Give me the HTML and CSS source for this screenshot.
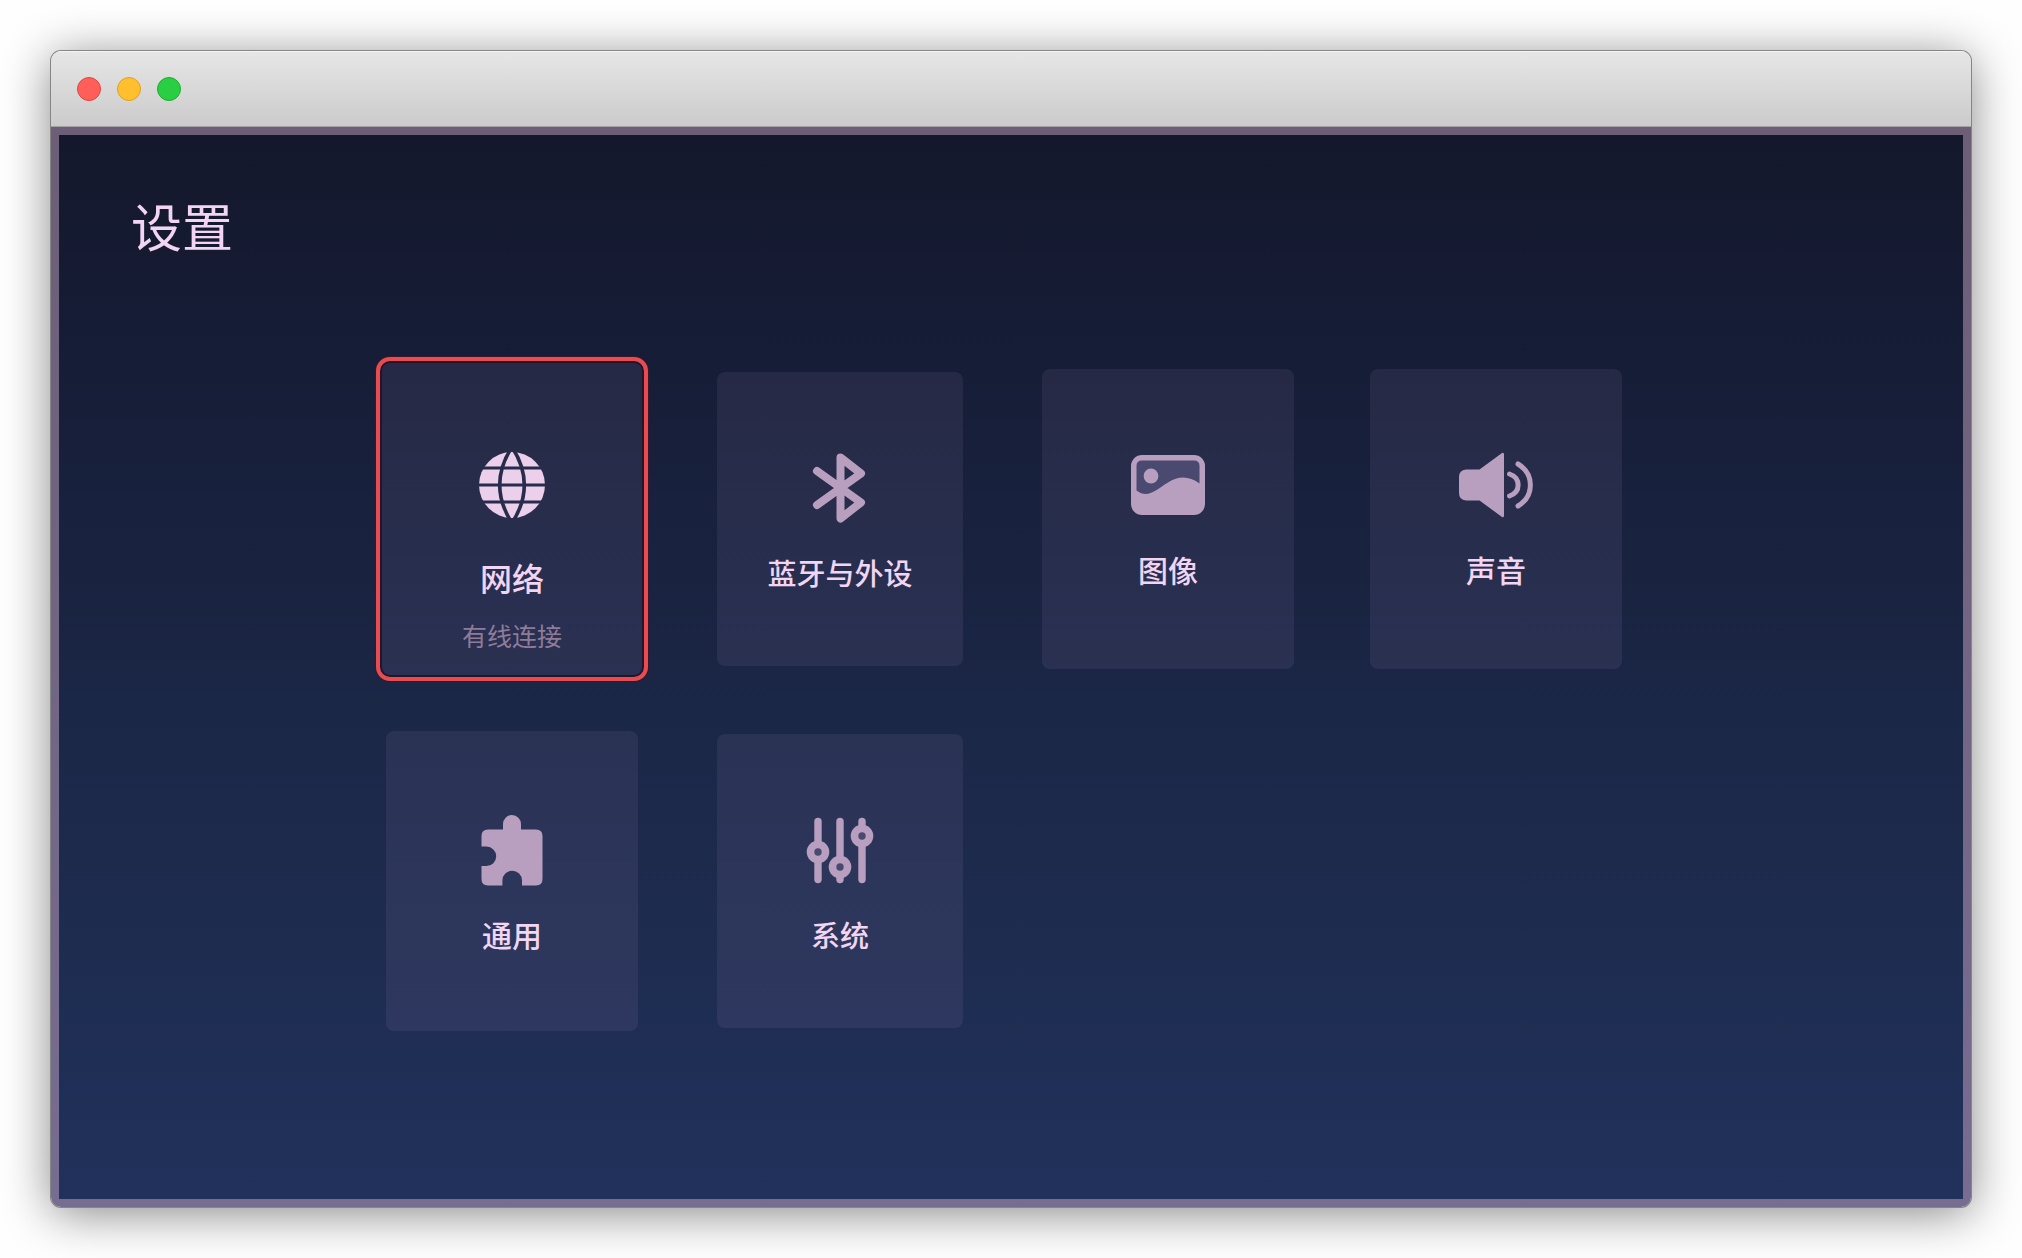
FILE: index.html
```html
<!DOCTYPE html>
<html lang="zh-CN">
<head>
<meta charset="utf-8">
<meta name="viewport" content="width=device-width, initial-scale=1">
<title>设置</title>
<link rel="stylesheet" href="styles.css">
</head>
<body>
<div class="window">
  <header class="titlebar">
    <button class="light light-close" type="button" aria-label="关闭"></button>
    <button class="light light-minimize" type="button" aria-label="最小化"></button>
    <button class="light light-zoom" type="button" aria-label="缩放"></button>
  </header>
  <div class="frame">
    <main class="screen">
      <h1 class="title">设置</h1>
      <ul class="grid">
        <li class="cell">
          <button class="card card-focused" type="button">
            <svg class="icon" viewBox="-38 -38 76 76" aria-hidden="true">
              <mask id="globe-lines">
                <rect x="-38" y="-38" width="76" height="76" fill="#fff"/>
                <g fill="none" stroke="#000" stroke-width="3">
                  <path d="M-38-17H38M-38 0H38M-38 17H38"/>
                  <path d="M0-38Q24.600 0 0 38Q-24.600 0 0-38Z" stroke-width="3.600"/>
                </g>
              </mask>
              <circle r="33" fill="currentColor" mask="url(#globe-lines)"/>
            </svg>
            <span class="label">网络</span>
            <span class="status">有线连接</span>
          </button>
        </li>
        <li class="cell">
          <button class="card card-compact" type="button">
            <svg class="icon" viewBox="-38 -38 76 76" aria-hidden="true">
              <path d="M-23-17L21 14.500L.5 30.500V-30.500L21-14.500L-23 17" fill="none" stroke="currentColor" stroke-width="8" stroke-linecap="round" stroke-linejoin="round"/>
            </svg>
            <span class="label">蓝牙与外设</span>
          </button>
        </li>
        <li class="cell">
          <button class="card" type="button">
            <svg class="icon" viewBox="-38 -38 76 76" aria-hidden="true">
              <rect x="-37" y="-30" width="74" height="60" rx="11" fill="currentColor"/>
              <path class="icon-inset" d="M-31.500-19Q-31.500-24.500-26-24.500H26Q31.500-24.500 31.500-19V-1.500C21-9 11-9.500 0-2.500C-11 4-20 14.500-31.500 5.500Z"/>
              <circle cx="-17" cy="-9" r="7.400" fill="currentColor"/>
            </svg>
            <span class="label">图像</span>
          </button>
        </li>
        <li class="cell">
          <button class="card" type="button">
            <svg class="icon" viewBox="-38 -38 76 76" aria-hidden="true">
              <path d="M-30-15.500H-16.500L6-32Q8-33 8-30.500V30.500Q8 33 6 32L-16.500 15.500H-30Q-37 15-37 8V-8Q-37-15-30-15.500Z" fill="currentColor"/>
              <path d="M13.500-11C25-7 25 7 13.500 11M22-21C38.500-11 38.500 11 22 21" fill="none" stroke="currentColor" stroke-width="5" stroke-linecap="round"/>
            </svg>
            <span class="label">声音</span>
          </button>
        </li>
        <li class="cell">
          <button class="card" type="button">
            <svg class="icon icon-tall" viewBox="-38 -38 76 79" aria-hidden="true">
              <path d="M-24-17.500H-9V-23A9 9 0 0 1 9-23V-17.500H24Q30.500-17.500 30.500-11V32Q30.500 38.500 24 38.500H10V33.500A9.800 9.800 0 0 0-9.600 33.500V38.500H-24Q-30.500 38.500-30.500 32V19H-25.500A9.700 9.700 0 0 0-25.500-.4H-30.500V-11Q-30.500-17.500-24-17.500Z" fill="currentColor"/>
            </svg>
            <span class="label">通用</span>
          </button>
        </li>
        <li class="cell">
          <button class="card card-compact" type="button">
            <svg class="icon" viewBox="-38 -38 76 76" aria-hidden="true">
              <path d="M-22-28.500V29.500M0-28.500V29.500M22-28.500V29.500" fill="none" stroke="currentColor" stroke-width="7.400" stroke-linecap="round"/>
              <g fill="currentColor">
                <circle cx="-22" cy="2" r="11.300"/>
                <circle cx="0" cy="17" r="11.300"/>
                <circle cx="22" cy="-14" r="11.300"/>
              </g>
              <g class="icon-inset">
                <circle cx="-22" cy="2" r="3.700"/>
                <circle cx="0" cy="17" r="3.700"/>
                <circle cx="22" cy="-14" r="3.700"/>
              </g>
            </svg>
            <span class="label">系统</span>
          </button>
        </li>
      </ul>
    </main>
  </div>
</div>
</body>
</html>
```

FILE: styles.css
```css
* {
  box-sizing: border-box;
}

body {
  margin: 0;
  min-height: 100vh;
  padding: 51px;
  display: flex;
  background: #fefefe;
  font-family: "Noto Sans CJK SC", "Noto Sans", sans-serif;
}

.window {
  flex: 1;
  display: flex;
  flex-direction: column;
  border-radius: 10px;
  overflow: hidden;
  box-shadow: 0 0 0 1px #868686, 0 6px 48px rgba(0, 0, 0, 0.48);
}

.titlebar {
  display: flex;
  align-items: center;
  gap: 16px;
  height: 76px;
  padding: 0 26px;
  background: linear-gradient(#e6e6e6, #cbcbcb);
  border-top: 1px solid #f4f4f4;
  border-bottom: 1px solid #a3a1a3;
}

.light {
  width: 24px;
  height: 24px;
  padding: 0;
  border: 1px solid;
  border-radius: 50%;
}

.light-close {
  background: #ff5f58;
  border-color: #e2463f;
}

.light-minimize {
  background: #ffbf2f;
  border-color: #e0a023;
}

.light-zoom {
  background: #29ce42;
  border-color: #1dae2c;
}

.frame {
  flex: 1;
  display: flex;
  padding: 8px;
  background: linear-gradient(#6c5e76, #776d91);
}

.screen {
  flex: 1;
  padding: 54px 72px;
  background: linear-gradient(#14182c, #161d37 22%, #1b2746 54%, #21315b);
}

.title {
  margin: 0;
  font-size: 51px;
  line-height: 72px;
  font-weight: 400;
  color: #f1d5f3;
}

.grid {
  display: flex;
  flex-wrap: wrap;
  gap: 62px 76px;
  width: 1250px;
  max-width: 100%;
  margin: 108px auto 0;
  padding: 0 14px 0 0;
  list-style: none;
}

.cell {
  display: flex;
  align-items: center;
  justify-content: center;
  width: 252px;
  height: 300px;
}

.card {
  flex: none;
  display: flex;
  flex-direction: column;
  align-items: center;
  justify-content: flex-start;
  width: 252px;
  height: 300px;
  padding: 78px 0 0;
  border: 0;
  border-radius: 8px;
  background: rgba(200, 170, 220, 0.09);
  color: #b99fbf;
  font-family: inherit;
}

.card-compact {
  width: 246px;
  height: 294px;
}

.card-focused {
  width: 272px;
  height: 324px;
  padding-top: 86px;
  border: 4px solid #e84c50;
  border-radius: 14px;
  box-shadow: inset 0 0 0 2px #24142c, 0 0 0 1px #35182f;
  color: #ebcfeb;
}

.icon {
  flex: none;
  width: 76px;
  height: 76px;
}

.icon-tall {
  height: 79px;
}

.icon-inset {
  fill: #4a4a70;
}

.label {
  margin-top: 26px;
  font-size: 30px;
  line-height: 40px;
  font-weight: 500;
  color: #f1d5f3;
}

.card-compact .label {
  font-size: 29px;
}

.card-focused .label {
  margin-top: 34px;
  font-size: 32px;
}

.status {
  margin-top: 20px;
  font-size: 25px;
  line-height: 36px;
  color: #8f7c9b;
}
```
